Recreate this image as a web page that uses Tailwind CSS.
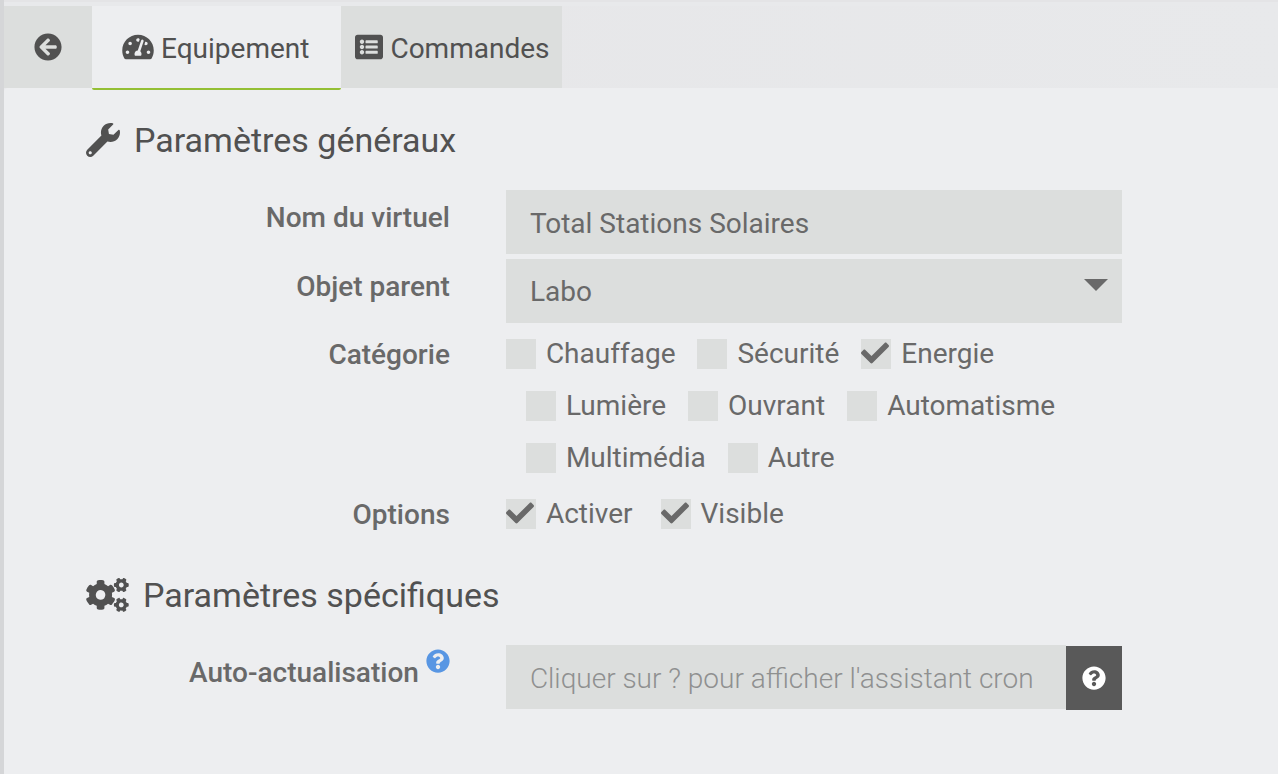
<!DOCTYPE html>
<html lang="fr">
<head>
<meta charset="utf-8">
<meta name="viewport" content="width=device-width, initial-scale=1">
<title>Equipement</title>
<script src="https://cdn.jsdelivr.net/npm/@tailwindcss/browser@4"></script>
</head>
<body class="min-h-screen flex flex-col border-l-4 border-[#d5d6d8] bg-[#e8e9eb] font-['Roboto',sans-serif] text-[28px] leading-8 text-[#696969]">
<svg class="hidden" aria-hidden="true">
  <symbol id="check" viewBox="0 0 512 512"><path d="M173.898 439.404l-166.4-166.4c-9.997-9.997-9.997-26.206 0-36.204l36.203-36.204c9.997-9.998 26.207-9.998 36.204 0L192 312.69 432.095 72.596c9.997-9.997 26.207-9.997 36.204 0l36.203 36.204c9.997 9.997 9.997 26.206 0 36.204l-294.4 294.401c-9.998 9.997-26.207 9.997-36.204-.001z"/></symbol>
  <symbol id="question" viewBox="0 0 512 512"><path d="M504 256c0 136.997-111.043 248-248 248S8 392.997 8 256C8 119.083 119.043 8 256 8s248 111.083 248 248zM262.655 90c-54.497 0-89.255 22.957-116.549 63.758-3.536 5.286-2.353 12.415 2.715 16.258l34.699 26.31c5.205 3.947 12.621 3.008 16.665-2.122 17.864-22.658 30.113-35.797 57.303-35.797 20.429 0 45.698 13.148 45.698 32.958 0 14.976-12.363 22.667-32.534 33.976C247.128 238.528 216 254.941 216 296v4c0 6.627 5.373 12 12 12h56c6.627 0 12-5.373 12-12v-1.333c0-28.462 83.186-29.647 83.186-106.667 0-58.002-60.165-102-116.531-102zM256 338c-25.365 0-46 20.635-46 46 0 25.364 20.635 46 46 46s46-20.636 46-46c0-25.365-20.635-46-46-46z"/></symbol>
  <defs><path id="small-cog" d="M512.1 191l-8.2 14.3c-3 5.3-9.4 7.5-15.1 5.4-11.8-4.4-22.6-10.7-32.1-18.6-4.6-3.8-5.8-10.5-2.8-15.7l8.2-14.3c-6.9-8-12.3-17.3-15.9-27.4h-16.5c-6 0-11.2-4.3-12.2-10.3-2-12-2.1-24.6 0-37.1 1-6 6.2-10.4 12.2-10.4h16.5c3.6-10.1 9-19.4 15.9-27.4l-8.2-14.3c-3-5.2-1.9-11.9 2.8-15.7 9.5-7.9 20.4-14.2 32.1-18.6 5.7-2.1 12.1.1 15.1 5.4l8.2 14.3c10.5-1.9 21.2-1.9 31.7 0L552 6.3c3-5.3 9.4-7.5 15.1-5.4 11.8 4.4 22.6 10.7 32.1 18.6 4.6 3.8 5.8 10.5 2.8 15.7l-8.2 14.3c6.9 8 12.3 17.3 15.9 27.4h16.5c6 0 11.2 4.3 12.2 10.3 2 12 2.1 24.6 0 37.1-1 6-6.2 10.4-12.2 10.4h-16.5c-3.6 10.1-9 19.4-15.9 27.4l8.2 14.3c3 5.2 1.9 11.9-2.8 15.7-9.5 7.9-20.4 14.2-32.1 18.6-5.7 2.1-12.1-.1-15.1-5.4l-8.2-14.3c-10.4 1.9-21.2 1.9-31.7 0zm-10.5-58.8c38.5 29.6 82.4-14.3 52.8-52.8-38.5-29.7-82.4 14.3-52.8 52.8z"/></defs>
</svg>

<div class="h-[2px] shrink-0 bg-[#e4e4e6]"></div>
<nav class="mt-1 flex h-[82px] shrink-0 text-[#515151] bg-linear-to-r from-[#e6e6e8] to-[#e8e9eb]" aria-label="Onglets">
  <a href="#retour" aria-label="Retour" class="flex w-[88px] items-center justify-center bg-[#dcdedd]">
    <svg class="size-7" fill="currentColor" viewBox="0 0 512 512"><path d="M256 504C119 504 8 393 8 256S119 8 256 8s248 111 248 248-111 248-248 248zm28.9-143.6L209.4 288H392c13.3 0 24-10.7 24-24v-16c0-13.3-10.7-24-24-24H209.4l75.5-72.4c9.7-9.3 9.9-24.8.4-34.3l-11-10.9c-9.4-9.4-24.6-9.4-33.9 0L107.7 239c-9.4 9.4-9.4 24.6 0 33.9l132.7 132.7c9.4 9.4 24.6 9.4 33.9 0l11-10.9c9.5-9.5 9.3-25-.4-34.3z"/></svg>
  </a>
  <a href="#equipement" aria-current="page" class="z-10 -mb-0.5 flex items-center gap-[7px] rounded-b-xs border-b-2 border-[#94bf35] bg-[#edeef0] pl-[30px] pr-8">
    <svg class="h-7 w-8" fill="currentColor" viewBox="0 0 576 512"><path d="M288 32C128.94 32 0 160.94 0 320c0 52.8 14.25 102.26 39.06 144.8 5.61 9.62 16.3 15.2 27.44 15.2h443c11.14 0 21.83-5.58 27.44-15.2C561.75 422.26 576 372.8 576 320c0-159.06-128.94-288-288-288zm0 64c14.71 0 26.58 10.13 30.32 23.65-1.11 2.26-2.64 4.23-3.45 6.67l-9.22 27.67c-5.13 3.49-10.97 6.01-17.64 6.01-17.67 0-32-14.33-32-32S270.33 96 288 96zM96 384c-17.67 0-32-14.33-32-32s14.33-32 32-32 32 14.33 32 32-14.33 32-32 32zm48-160c-17.67 0-32-14.33-32-32s14.33-32 32-32 32 14.33 32 32-14.33 32-32 32zm246.77-72.41l-61.33 184C343.13 347.33 352 364.54 352 384c0 11.72-3.38 22.55-8.88 32H232.88c-5.5-9.45-8.88-20.28-8.88-32 0-33.94 26.5-61.43 59.9-63.59l61.34-184.01c4.17-12.56 17.73-19.45 30.36-15.17 12.57 4.19 19.35 17.79 15.17 30.36zm14.66 57.2l15.52-46.55c3.47-1.29 7.13-2.23 11.05-2.23 17.67 0 32 14.33 32 32s-14.33 32-32 32c-11.38-.01-20.89-6.28-26.57-15.22zM480 384c-17.67 0-32-14.33-32-32s14.33-32 32-32 32 14.33 32 32-14.33 32-32 32z"/></svg>
    <span class="pt-1">Equipement</span>
  </a>
  <a href="#commandes" class="flex items-center gap-[7px] bg-[#dcdedd] pl-[14px] pr-3">
    <svg class="size-7" fill="currentColor" viewBox="0 0 512 512"><path d="M464 480H48c-26.51 0-48-21.49-48-48V80c0-26.51 21.49-48 48-48h416c26.51 0 48 21.49 48 48v352c0 26.51-21.49 48-48 48zM128 120c-22.091 0-40 17.909-40 40s17.909 40 40 40 40-17.909 40-40-17.909-40-40-40zm0 96c-22.091 0-40 17.909-40 40s17.909 40 40 40 40-17.909 40-40-17.909-40-40-40zm0 96c-22.091 0-40 17.909-40 40s17.909 40 40 40 40-17.909 40-40-17.909-40-40-40zm288-136v-32c0-6.627-5.373-12-12-12H204c-6.627 0-12 5.373-12 12v32c0 6.627 5.373 12 12 12h200c6.627 0 12-5.373 12-12zm0 96v-32c0-6.627-5.373-12-12-12H204c-6.627 0-12 5.373-12 12v32c0 6.627 5.373 12 12 12h200c6.627 0 12-5.373 12-12zm0 96v-32c0-6.627-5.373-12-12-12H204c-6.627 0-12 5.373-12 12v32c0 6.627 5.373 12 12 12h200c6.627 0 12-5.373 12-12z"/></svg>
    <span class="pt-1">Commandes</span>
  </a>
</nav>

<form class="flex-1 rounded-tl bg-[#edeef0] pt-8">
  <h2 class="flex items-center gap-[14px] pl-[82px] text-[34px] leading-10 text-[#515151]">
    <svg class="size-[34px]" fill="currentColor" viewBox="0 0 512 512"><path d="M507.73 109.1c-2.24-9.03-13.54-12.09-20.12-5.51l-74.36 74.36-67.88-11.31-11.31-67.88 74.36-74.36c6.62-6.62 3.43-17.9-5.66-20.16-47.38-11.74-99.55.91-136.58 37.93-39.64 39.64-50.55 97.1-34.05 147.2L18.74 402.76c-24.99 24.99-24.99 65.51 0 90.5 24.99 24.99 65.51 24.99 90.5 0l213.21-213.21c50.12 16.71 107.47 5.68 147.37-34.22 37.07-37.07 49.7-89.32 37.91-136.73zM64 472c-13.25 0-24-10.75-24-24 0-13.26 10.75-24 24-24s24 10.74 24 24c0 13.25-10.75 24-24 24z"/></svg>
    Paramètres généraux
  </h2>

  <div class="mt-[30px] flex gap-14">
    <label for="nom" class="w-[35%] pt-3 text-right font-medium">Nom du virtuel</label>
    <input id="nom" type="text" value="Total Stations Solaires" class="h-16 min-w-0 max-w-[616px] flex-1 bg-[#dcdedd] px-6 pt-0.5 outline-none">
  </div>

  <div class="mt-[5px] flex gap-14">
    <label for="parent" class="w-[35%] pt-3 text-right font-medium">Objet parent</label>
    <div class="relative min-w-0 max-w-[616px] flex-1">
      <select id="parent" class="block h-16 w-full appearance-none bg-[#dcdedd] px-6 pt-0.5 outline-none"><option>Labo</option></select>
      <svg class="pointer-events-none absolute right-[14px] top-5 h-3 w-6" fill="currentColor" viewBox="0 0 24 12"><path d="M0 0h24L12 12z"/></svg>
    </div>
  </div>

  <div class="mt-[5px] flex gap-14" role="group" aria-labelledby="categorie">
    <span id="categorie" class="w-[35%] pt-[11px] text-right font-medium">Catégorie</span>
    <div class="min-w-0 max-w-[616px] flex-1">
      <div class="flex h-[52px] items-center gap-[22px]">
        <label class="flex items-center gap-[10px]"><span class="grid size-[30px] bg-[#dcdedd]"><input type="checkbox" class="peer col-start-1 row-start-1 size-[30px] appearance-none"><svg class="col-start-1 row-start-1 hidden size-7 peer-checked:block" fill="currentColor"><use href="#check"/></svg></span>Chauffage</label>
        <label class="flex items-center gap-[10px]"><span class="grid size-[30px] bg-[#dcdedd]"><input type="checkbox" class="peer col-start-1 row-start-1 size-[30px] appearance-none"><svg class="col-start-1 row-start-1 hidden size-7 peer-checked:block" fill="currentColor"><use href="#check"/></svg></span>Sécurité</label>
        <label class="flex items-center gap-[10px]"><span class="grid size-[30px] bg-[#dcdedd]"><input type="checkbox" checked class="peer col-start-1 row-start-1 size-[30px] appearance-none"><svg class="col-start-1 row-start-1 hidden size-7 peer-checked:block" fill="currentColor"><use href="#check"/></svg></span>Energie</label>
      </div>
      <div class="flex h-[52px] items-center gap-[22px] pl-5">
        <label class="flex items-center gap-[10px]"><span class="grid size-[30px] bg-[#dcdedd]"><input type="checkbox" class="peer col-start-1 row-start-1 size-[30px] appearance-none"><svg class="col-start-1 row-start-1 hidden size-7 peer-checked:block" fill="currentColor"><use href="#check"/></svg></span>Lumière</label>
        <label class="flex items-center gap-[10px]"><span class="grid size-[30px] bg-[#dcdedd]"><input type="checkbox" class="peer col-start-1 row-start-1 size-[30px] appearance-none"><svg class="col-start-1 row-start-1 hidden size-7 peer-checked:block" fill="currentColor"><use href="#check"/></svg></span>Ouvrant</label>
        <label class="flex items-center gap-[10px]"><span class="grid size-[30px] bg-[#dcdedd]"><input type="checkbox" class="peer col-start-1 row-start-1 size-[30px] appearance-none"><svg class="col-start-1 row-start-1 hidden size-7 peer-checked:block" fill="currentColor"><use href="#check"/></svg></span>Automatisme</label>
      </div>
      <div class="flex h-[52px] items-center gap-[22px] pl-5">
        <label class="flex items-center gap-[10px]"><span class="grid size-[30px] bg-[#dcdedd]"><input type="checkbox" class="peer col-start-1 row-start-1 size-[30px] appearance-none"><svg class="col-start-1 row-start-1 hidden size-7 peer-checked:block" fill="currentColor"><use href="#check"/></svg></span>Multimédia</label>
        <label class="flex items-center gap-[10px]"><span class="grid size-[30px] bg-[#dcdedd]"><input type="checkbox" class="peer col-start-1 row-start-1 size-[30px] appearance-none"><svg class="col-start-1 row-start-1 hidden size-7 peer-checked:block" fill="currentColor"><use href="#check"/></svg></span>Autre</label>
      </div>
    </div>
  </div>

  <div class="mt-1 flex gap-14" role="group" aria-labelledby="options">
    <span id="options" class="w-[35%] pt-[11px] text-right font-medium">Options</span>
    <div class="flex h-[52px] items-center gap-7">
      <label class="flex items-center gap-[10px]"><span class="grid size-[30px] bg-[#dcdedd]"><input type="checkbox" checked class="peer col-start-1 row-start-1 size-[30px] appearance-none"><svg class="col-start-1 row-start-1 hidden size-7 peer-checked:block" fill="currentColor"><use href="#check"/></svg></span>Activer</label>
      <label class="flex items-center gap-[10px]"><span class="grid size-[30px] bg-[#dcdedd]"><input type="checkbox" checked class="peer col-start-1 row-start-1 size-[30px] appearance-none"><svg class="col-start-1 row-start-1 hidden size-7 peer-checked:block" fill="currentColor"><use href="#check"/></svg></span>Visible</label>
    </div>
  </div>

  <h2 class="mt-[35px] flex items-center gap-[14px] pl-[82px] text-[34px] leading-10 text-[#515151]">
    <svg class="h-[34px] w-[43px]" fill="currentColor" viewBox="0 0 640 512"><use href="#small-cog"/><use href="#small-cog" y="299"/><path d="M386.3 286.1l33.7 16.8c10.1 5.8 14.5 18.1 10.5 29.1-8.9 24.2-26.4 46.4-42.6 65.8-7.4 8.9-20.2 11.1-30.3 5.3l-29.1-16.8c-16 13.7-34.6 24.6-54.9 31.7v33.6c0 11.6-8.3 21.6-19.7 23.6-24.6 4.2-50.4 4.4-75.9 0-11.5-2-20-11.9-20-23.6V418c-20.3-7.2-38.9-18-54.9-31.7L74 403c-10 5.8-22.9 3.6-30.3-5.3-16.2-19.4-33.3-41.6-42.2-65.7-4-10.9.4-23.2 10.5-29.1l33.3-16.8c-3.9-20.9-3.9-42.4 0-63.4L12 205.8c-10.1-5.8-14.6-18.1-10.5-29 8.9-24.2 26-46.4 42.2-65.8 7.4-8.9 20.2-11.1 30.3-5.3l29.1 16.8c16-13.7 34.6-24.6 54.9-31.7V57.1c0-11.5 8.2-21.5 19.6-23.5 24.6-4.2 50.5-4.4 76-.1 11.5 2 20 11.9 20 23.6v33.6c20.3 7.2 38.9 18 54.9 31.7l29.1-16.8c10-5.8 22.9-3.6 30.3 5.3 16.2 19.4 33.2 41.6 42.1 65.8 4 10.9.1 23.2-10 29.1l-33.7 16.8c3.9 21 3.9 42.5 0 63.5zm-117.6 21.1c59.2-77-28.7-164.9-105.7-105.7-59.2 77 28.7 164.9 105.7 105.7z"/></svg>
    Paramètres spécifiques
  </h2>

  <div class="mt-[30px] flex gap-14">
    <label for="auto" class="flex w-[35%] items-start justify-end gap-[7px] pt-1 font-medium"><span class="pt-2">Auto-actualisation</span><svg class="size-6 text-[#5896e3]" fill="currentColor"><use href="#question"/></svg></label>
    <div class="flex min-w-0 max-w-[616px] flex-1">
      <input id="auto" type="text" placeholder="Cliquer sur ? pour afficher l'assistant cron" class="h-16 min-w-0 flex-1 bg-[#dcdedd] pl-6 pt-0.5 font-light outline-none placeholder:text-[#8f9090]">
      <button type="button" aria-label="Assistant cron" class="mt-px flex h-16 w-14 items-center justify-center bg-[#595959] text-white"><svg class="size-6" fill="currentColor"><use href="#question"/></svg></button>
    </div>
  </div>
</form>
</body>
</html>
